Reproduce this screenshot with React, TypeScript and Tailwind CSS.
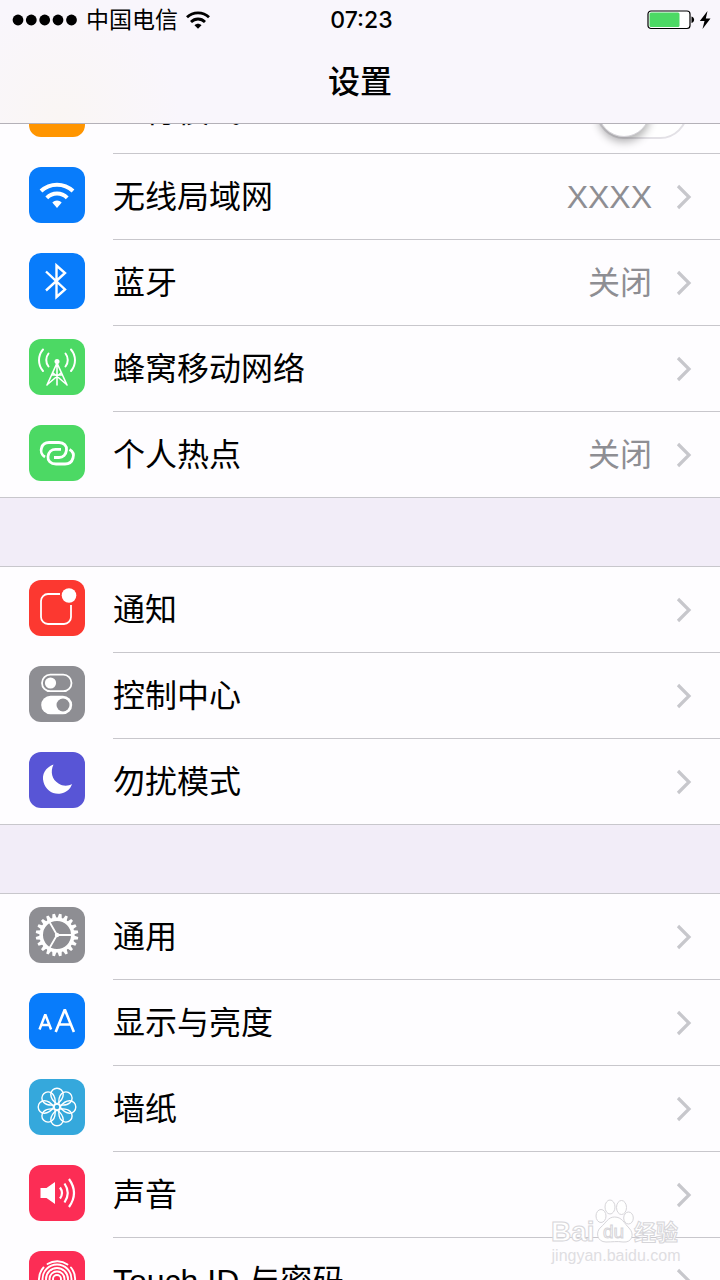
import React, { useState } from "react";

type Row = {
  label: string;
  color: string;
  icon: React.ReactNode;
  value?: string;
  toggle?: boolean;
};

const line = {
  fill: "none",
  stroke: "white",
  strokeLinecap: "round" as const,
  strokeLinejoin: "round" as const,
};

function Glyph({ children }: { children: React.ReactNode }) {
  return (
    <svg viewBox="0 0 56 56" className="size-14" aria-hidden="true">
      {children}
    </svg>
  );
}

const Airplane = () => (
  <Glyph>
    <path
      fill="white"
      d="M46 27c0-2-2-3-4-3h-9L24 11h-4l5 13h-8l-4-4h-3l3 7-3 7h3l4-4h8l-5 13h4l9-13h9c2 0 4-1 4-3z"
    />
  </Glyph>
);

const Wifi = () => (
  <Glyph>
    <g {...line} strokeLinecap="butt" strokeWidth="4">
      <path d="M12 24C21 15.500 35 15.500 44 24" />
      <path d="M17.800 30.800C23.500 25 32.500 25 38.200 30.800" />
    </g>
    <path fill="white" d="M23.300 35.500c2.500-2.800 6.900-2.800 9.400 0L28 41z" />
  </Glyph>
);

const Bluetooth = () => (
  <Glyph>
    <path {...line} strokeLinecap="butt" strokeLinejoin="miter" strokeWidth="2.4" d="M17 18.500L36 36.500L27.500 44V12.500L36 20L17 37.500" />
  </Glyph>
);

const Cellular = () => (
  <Glyph>
    <g {...line} strokeWidth="2">
      <path d="M14 10.500a16.500 16.500 0 0 0 0 21.500M19.500 14.500a10.500 10.500 0 0 0 0 13M42 10.500a16.500 16.500 0 0 1 0 21.500M36.500 14.500a10.500 10.500 0 0 1 0 13" />
      <path d="M28 24L18 46M28 24L38 46M28 22V46M22.500 36H33.500M23.500 33.500L37 45M32.500 33.500L19 45" strokeWidth="1.600" />
    </g>
    <circle cx="28" cy="22.500" r="2.500" fill="white" />
  </Glyph>
);

const Hotspot = () => (
  <Glyph>
    <g {...line} strokeLinecap="butt" strokeWidth="2.800">
      <path d="M16 32C12.500 30 11.500 26 12.500 23C13.500 19.500 16 17.500 20 17.500H30C35 17.500 38 21 37.500 25C37 29.500 34 32.500 30 32.500H25" />
      <path d="M40.500 24.500C44 26.500 45 30 44 33C43 36.500 40 39 36 39H27C21.500 39 18.500 35.500 19 31.500C19.500 27 22.500 24.300 26.500 24.300H32" />
    </g>
  </Glyph>
);

const Notifications = () => (
  <Glyph>
    <path {...line} strokeLinecap="butt" strokeWidth="1.8" d="M31 14H19a7 7 0 0 0-7 7V37a7 7 0 0 0 7 7H35a7 7 0 0 0 7-7V25" />
    <circle cx="40" cy="15.500" r="7.300" fill="white" />
  </Glyph>
);

const ControlCenter = () => (
  <Glyph>
    <rect x="13" y="8.700" width="29.500" height="16.500" rx="8.250" {...line} strokeWidth="1.8" />
    <circle cx="21.500" cy="17" r="5.600" fill="white" />
    <rect x="12.200" y="29.700" width="31" height="18.600" rx="9.300" fill="white" />
    <circle cx="34" cy="39" r="6.500" fill="#8e8e93" />
  </Glyph>
);

const Moon = () => (
  <Glyph>
    <path fill="white" d="M24.500 12.500C16.500 15.500 12.500 22 14.500 30C16.500 38 24 43 32 41.500C37.500 40.500 41.500 37 43 32C39.500 34 34 34.500 29.500 31.500C23 27.500 21 20 24.500 12.500z" />
  </Glyph>
);

const teeth = Array.from({ length: 20 }, (_, i) => i * 18 + 9);

const Gear = () => (
  <Glyph>
    <circle cx="28" cy="28" r="15.800" {...line} strokeWidth="3.600" />
    {teeth.map((a) => (
      <path key={a} d="M25.700 12L26.700 6.700H29.300L30.300 12z" fill="white" transform={`rotate(${a} 28 28)`} />
    ))}
    <g {...line} strokeWidth="1.800">
      <path d="M28 28H43M28 28L20.500 15M28 28L20.500 41" />
    </g>
    <circle cx="28" cy="28" r="2.200" fill="white" />
  </Glyph>
);

const Display = () => (
  <Glyph>
    <g {...line} strokeLinecap="butt" strokeLinejoin="bevel">
      <path strokeWidth="2.500" d="M10.500 36.500L16.300 21.500L22.100 36.500M12.500 32H20" />
      <path strokeWidth="2.600" d="M26.700 39L35.800 16.500L44.900 39M29.500 31.500H42" />
    </g>
  </Glyph>
);

const petals = Array.from({ length: 8 }, (_, i) => i * 45);

const Wallpaper = () => (
  <Glyph>
    <g {...line} strokeWidth="1.400">
      {petals.map((a) => (
        <path key={a} d="M28 25C24 22 21.800 18.500 21.800 15.400A6.200 6.200 0 0 1 34.200 15.400C34.200 18.500 32 22 28 25Z" transform={`rotate(${a} 28 28)`} />
      ))}
      <circle cx="28" cy="28" r="3" />
    </g>
  </Glyph>
);

const Sound = () => (
  <Glyph>
    <path fill="white" d="M11.500 23H17.500L26 17V39L17.500 33H11.500z" />
    <g {...line} strokeLinecap="butt" strokeWidth="2.200">
      <path d="M31 22.500Q35 28 31 33.500M35.500 18.500Q42 28 35.500 37.500M40 14Q50 28 40 42" />
    </g>
  </Glyph>
);

const Fingerprint = () => (
  <Glyph>
    <g {...line} strokeWidth="1.900">
      <path d="M18.500 13A18 18 0 0 1 38.500 13.500" />
      <path d="M10 30A18 18 0 0 1 14.500 16.500M42 16.500A18 18 0 0 1 46 30" />
      <circle cx="28" cy="28" r="14.500" />
      <circle cx="28" cy="28" r="11" />
      <circle cx="28" cy="28" r="7.500" />
      <circle cx="28" cy="28" r="4" />
    </g>
  </Glyph>
);

const groups: Row[][] = [
  [
    { label: "飞行模式", color: "bg-[#ff9500]", icon: <Airplane />, toggle: true },
    { label: "无线局域网", color: "bg-[#087cfb]", icon: <Wifi />, value: "XXXX" },
    { label: "蓝牙", color: "bg-[#087cfb]", icon: <Bluetooth />, value: "关闭" },
    { label: "蜂窝移动网络", color: "bg-[#4cd964]", icon: <Cellular /> },
    { label: "个人热点", color: "bg-[#4cd964]", icon: <Hotspot />, value: "关闭" },
  ],
  [
    { label: "通知", color: "bg-[#fc3830]", icon: <Notifications /> },
    { label: "控制中心", color: "bg-[#8e8e93]", icon: <ControlCenter /> },
    { label: "勿扰模式", color: "bg-[#5855d6]", icon: <Moon /> },
  ],
  [
    { label: "通用", color: "bg-[#8e8e93]", icon: <Gear /> },
    { label: "显示与亮度", color: "bg-[#087cfb]", icon: <Display /> },
    { label: "墙纸", color: "bg-[#35a8dc]", icon: <Wallpaper /> },
    { label: "声音", color: "bg-[#fc2d55]", icon: <Sound /> },
    { label: "Touch ID 与密码", color: "bg-[#fc2d55]", icon: <Fingerprint /> },
  ],
];

function RowBody({ row }: { row: Row }) {
  return (
    <>
      <span className={`mb-1 size-14 shrink-0 overflow-hidden rounded-xl ${row.color}`}>{row.icon}</span>
      <span className="grow text-[32px] leading-10 text-black">{row.label}</span>
    </>
  );
}

function SettingsRow({ row }: { row: Row }) {
  const [on, setOn] = useState(false);
  const box = "flex h-[86px] items-center gap-7 pl-[29px] pr-7";
  return (
    <li className="relative after:absolute after:right-0 after:bottom-0 after:left-[113px] after:h-px after:bg-[#c8c7cc] last:after:left-0">
      {row.toggle ? (
        <label className={box}>
          <RowBody row={row} />
          <input type="checkbox" role="switch" className="peer sr-only" checked={on} onChange={() => setOn(!on)} />
          <span className="mr-1 flex h-14 w-23 items-center rounded-full border-2 border-[#e3e1e6] bg-white peer-checked:justify-end peer-checked:bg-[#4cd964]">
            <span className="size-13 rounded-full border border-[#d6d4d9] bg-white shadow-[0_5px_8px_rgba(0,0,0,0.3)]" />
          </span>
        </label>
      ) : (
        <a href="#" className={box}>
          <RowBody row={row} />
          {row.value && <span className="-mr-1 text-[32px] leading-10 text-[#8e8e93]">{row.value}</span>}
          <svg viewBox="0 0 16 26" className="h-[26px] w-4 shrink-0" aria-hidden="true">
            <path d="M2 2L13 13L2 24" fill="none" stroke="#c7c7cc" strokeWidth="3.200" />
          </svg>
        </a>
      )}
    </li>
  );
}

function StatusBar() {
  return (
    <div className="grid h-10 grid-cols-3 items-center pr-[9px] pl-3 text-[23px] leading-7">
      <div className="flex items-center gap-2">
        <svg viewBox="0 0 66 12" className="h-3 w-[66px]" aria-hidden="true">
          {[6, 19.300, 32.700, 46, 59.500].map((x) => (
            <circle key={x} cx={x} cy="6" r="5.400" />
          ))}
        </svg>
        <span className="whitespace-nowrap">中国电信</span>
        <svg viewBox="0 0 24 18" className="h-[18px] w-6" aria-hidden="true">
          <g fill="none" stroke="black" strokeWidth="2.800">
            <path d="M1 6.200C7 .4 17 .4 23 6.200" />
            <path d="M5 11C9 7 15 7 19 11" />
          </g>
          <path d="M8.500 14.200c2-2 5-2 7 0L12 17.800z" />
        </svg>
      </div>
      <time className="text-center font-medium font-[Inter,'Liberation_Sans',sans-serif]">07:23</time>
      <div className="flex items-center justify-end gap-1">
        <svg viewBox="0 0 48 20" className="h-5 w-12" aria-hidden="true">
          <rect x="1" y="1" width="42" height="17.500" rx="3" fill="white" stroke="black" strokeWidth="1.200" />
          <rect x="2.500" y="2.500" width="30" height="14.500" rx="1.500" fill="#4cd964" />
          <path d="M44.500 6.500c3.500.5 3.500 6 0 6.500z" />
        </svg>
        <svg viewBox="0 0 12 20" className="h-5 w-3" aria-hidden="true">
          <path d="M8.500 1L.8 11H5.500L3.500 19L11.500 8.500H6.800z" />
        </svg>
      </div>
    </div>
  );
}

function Watermark() {
  return (
    <div className="pointer-events-none absolute right-9 bottom-3.5 flex flex-col items-center font-['Liberation_Sans','Noto_Sans_CJK_SC',sans-serif]" aria-hidden="true">
      <svg viewBox="-4 0 136 48" className="h-12 w-34" fill="white" stroke="#d6d5d9" strokeWidth="1">
        <text x="-1" y="43" fontSize="28" fontWeight="700">Bai</text>
        <ellipse cx="49" cy="18" rx="5" ry="6.500" />
        <ellipse cx="58" cy="9" rx="5" ry="7" />
        <ellipse cx="69.500" cy="9.500" rx="5" ry="7" />
        <ellipse cx="76.500" cy="20" rx="4.800" ry="6" />
        <path d="M62.500 19C56 19 54 25 49 29C43 34 45 44 54 44C60 44 65 43 71 44C80 45 83 36 77 30C72 25 70 19 62.500 19z" />
        <text x="51" y="40" fontSize="19" fontWeight="400">du</text>
        <text x="82" y="42" fontSize="22" fontWeight="700">经验</text>
      </svg>
      <span className="text-base leading-5 text-[#dfdee2]">jingyan.baidu.com</span>
    </div>
  );
}

export default function App() {
  return (
    <div className="relative flex h-screen flex-col overflow-hidden bg-[#f2edf8] font-['Liberation_Sans','Noto_Sans_CJK_SC',sans-serif]">
      <header className="z-10 shrink-0 border-b border-[#b4b1b8] bg-[#f9f6fc] bg-[radial-gradient(circle_at_60px_120px,#faf6f4,#f9f6fc_120px)]">
        <StatusBar />
        <h1 className="h-[83px] pt-[22px] text-center text-[32px] leading-10 font-medium">设置</h1>
      </header>
      <main className="-mt-[56px] flex flex-col gap-[68px]">
        {groups.map((rows, i) => (
          <ul key={i} className={i ? "border-t border-[#c8c7cc] bg-[#fefdff]" : "bg-[#fefdff]"}>
            {rows.map((row) => (
              <SettingsRow key={row.label} row={row} />
            ))}
          </ul>
        ))}
      </main>
      <Watermark />
    </div>
  );
}
